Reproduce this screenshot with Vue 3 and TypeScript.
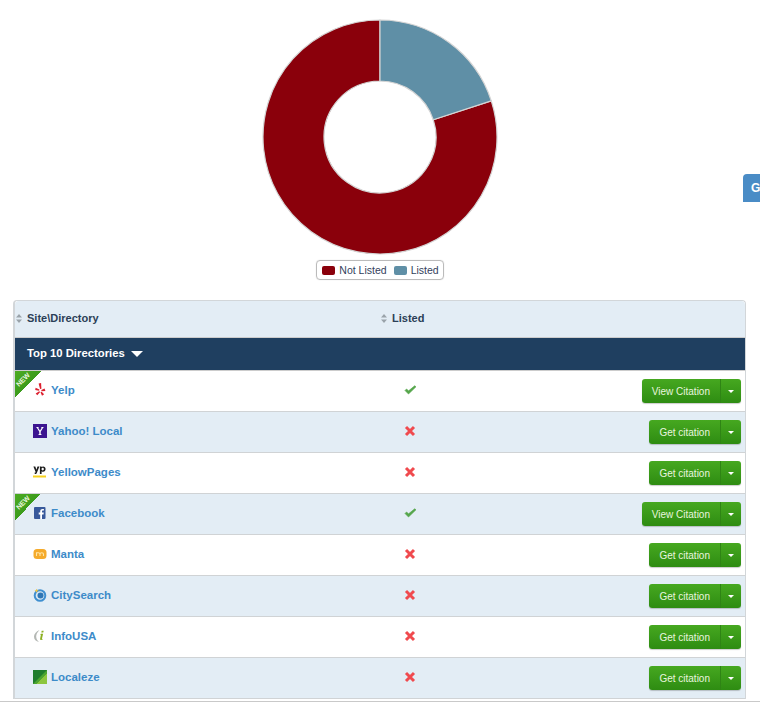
<script setup lang="ts">
type Row = { name: string; icon: string; listed: boolean; isNew?: boolean }

const rows: Row[] = [
  { name: 'Yelp', icon: 'yelp', listed: true, isNew: true },
  { name: 'Yahoo! Local', icon: 'yahoo', listed: false },
  { name: 'YellowPages', icon: 'yp', listed: false },
  { name: 'Facebook', icon: 'facebook', listed: true, isNew: true },
  { name: 'Manta', icon: 'manta', listed: false },
  { name: 'CitySearch', icon: 'citysearch', listed: false },
  { name: 'InfoUSA', icon: 'infousa', listed: false },
  { name: 'Localeze', icon: 'localeze', listed: false }
]

// donut slices, angles in degrees from 12 o'clock
const point = (r: number, deg: number) => {
  const a = ((deg - 90) * Math.PI) / 180
  return `${(120 + r * Math.cos(a)).toFixed(2)} ${(120 + r * Math.sin(a)).toFixed(2)}`
}

const slice = (from: number, to: number) => {
  const large = to - from > 180 ? 1 : 0
  const outer = 117
  const inner = 56
  return `M${point(outer, from)} A${outer} ${outer} 0 ${large} 1 ${point(outer, to)} L${point(inner, to)} A${inner} ${inner} 0 ${large} 0 ${point(inner, from)} Z`
}

const listedPath = slice(0, 72)
const notListedPath = slice(72, 360)
</script>

<template>
  <div class="page">
    <div class="side-tab">G</div>

    <div class="chart">
      <svg class="donut" width="240" height="240" viewBox="0 0 240 240">
        <path :d="notListedPath" fill="#8a000b" stroke="#d4d4d4" stroke-width="1.2" />
        <path :d="listedPath" fill="#5f8fa6" stroke="#d4d4d4" stroke-width="1.2" />
      </svg>
      <div class="legend">
        <span class="swatch red"></span>
        <span class="legend-text">Not Listed</span>
        <span class="swatch blue"></span>
        <span class="legend-text">Listed</span>
      </div>
    </div>

    <div class="table">
      <div class="head-row">
        <div class="head-cell">
          <svg class="sort" width="6" height="9" viewBox="0 0 6 9"><path d="M3 0L6 3.6H0ZM3 9L0 5.4H6Z" fill="#9aa3aa" /></svg>
          <span>Site\Directory</span>
        </div>
        <div class="head-cell">
          <svg class="sort" width="6" height="9" viewBox="0 0 6 9"><path d="M3 0L6 3.6H0ZM3 9L0 5.4H6Z" fill="#9aa3aa" /></svg>
          <span>Listed</span>
        </div>
      </div>

      <div class="group-row">
        <span>Top 10 Directories</span>
        <span class="group-caret"></span>
      </div>

      <div v-for="(row, i) in rows" :key="row.name" class="row" :class="{ alt: i % 2 === 1 }">
        <div v-if="row.isNew" class="ribbon"><span>NEW</span></div>
        <div class="site">
          <span class="icon">
            <svg v-if="row.icon === 'yelp'" width="14" height="14" viewBox="0 0 14 14">
              <g fill="#dc1f2e">
                <path d="M5.600 .6l2.500-.5.300 5.600-1.300.4z" />
                <path d="M2.600 4.800l3.800 1.700-.3 1.300-3.900-.7z" />
                <path d="M2.700 10.600l3.500-2.300.9.800-2.800 3.200z" />
                <path d="M7.500 9.200l1.100-.5 2.500 2.600-2.100 1.500z" />
                <path d="M8.300 6.900l3.300-1.300.8 2.300-3.900.4z" />
              </g>
            </svg>
            <svg v-else-if="row.icon === 'yahoo'" width="14" height="14" viewBox="0 0 14 14">
              <rect width="14" height="14" fill="#3c1590" />
              <path d="M3.200 3h2.600v.6l-.7.1L7 6.600l1.800-2.900-.7-.1V3h2.600v.6l-.6.1L7.700 7.800v2.300l.8.1v.7h-3v-.7l.8-.1V7.800L3.800 3.700l-.6-.1z" fill="#fff" />
            </svg>
            <svg v-else-if="row.icon === 'yp'" width="14" height="14" viewBox="0 0 14 14">
              <path d="M.4 1.500h1.900l1.100 3.200 1.100-3.200h1.900L3.800 8c-.3.800-.9 1.100-2.100 1V7.600c.6 0 .9 0 1-.4z" fill="#1c1c1c" />
              <path d="M6.900 1.500h1.600v.6c.4-.5.900-.7 1.600-.7 1.500 0 2.500 1.100 2.500 2.700s-1 2.700-2.500 2.700c-.6 0-1.100-.2-1.500-.6V9H6.900zM9.700 2.700c-.7 0-1.200.6-1.200 1.400s.5 1.400 1.200 1.400 1.200-.6 1.200-1.400-.5-1.400-1.200-1.400z" fill="#1c1c1c" />
              <rect x="0" y="10.500" width="13" height="2" fill="#f7d21e" />
            </svg>
            <svg v-else-if="row.icon === 'facebook'" width="14" height="14" viewBox="0 0 14 14">
              <rect x="1" y="1" width="11.500" height="12" rx="1" fill="#38599b" />
              <path d="M9 13V8.400h1.500l.3-1.800H9V5.500c0-.5.2-.9.9-.9h1V3c-.3 0-.8-.1-1.300-.1-1.400 0-2.400.8-2.400 2.400v1.300H5.700v1.800h1.500V13z" fill="#fff" />
            </svg>
            <svg v-else-if="row.icon === 'manta'" width="14" height="14" viewBox="0 0 14 14">
              <rect x=".5" y="2" width="13" height="10" rx="3.500" fill="#f5ab2c" />
              <path d="M3.500 9V5.800h1.800c1 0 1.700.5 1.700 1.400V9M7 7.200c0-.9.700-1.400 1.700-1.400s1.800.5 1.800 1.400V9" fill="none" stroke="#ffe6a8" stroke-width="1.100" />
            </svg>
            <svg v-else-if="row.icon === 'citysearch'" width="14" height="14" viewBox="0 0 14 14">
              <circle cx="7" cy="7.500" r="5.300" fill="#dbe9f3" stroke="#3f8fd0" stroke-width="2" />
              <circle cx="7.500" cy="7.500" r="3" fill="#2f77b5" />
              <path d="M3.500 .8l.8 1.400 1.500.5-1.500.6-.8 1.500-.7-1.500-1.500-.6 1.500-.5z" fill="#f2c440" />
            </svg>
            <svg v-else-if="row.icon === 'infousa'" width="14" height="14" viewBox="0 0 14 14">
              <path d="M6.500 1C3 2.500 1 5 1 7.800s2 4.700 5 5.200C4.200 11.300 3.200 9.800 3.200 7.600S4.300 3.300 6.500 1z" fill="#b4b8b4" />
              <path d="M8.700 1.800h2l-.4 1.800H8.300zM8 4.800h2.100L9 9.600c-.1.500.2.600.8.200l-.1.800c-1.200.8-2.900.6-2.600-.8l.8-4-.9-.2z" fill="#8cb021" />
            </svg>
            <svg v-else width="14" height="14" viewBox="0 0 14 14">
              <rect width="14" height="14" fill="#1f7d2d" />
              <path d="M14 3v11H3z" fill="#8cc63f" />
              <path d="M14 0v3L3 14H0z" fill="#4ba52f" />
            </svg>
          </span>
          <a class="site-name">{{ row.name }}</a>
        </div>
        <div class="status">
          <svg v-if="row.listed" width="13" height="10" viewBox="0 0 13 10">
            <path d="M1 5.500L4.500 9 12 1.800 10.700.8 4.600 5.800 2.500 4z" fill="#55a64b" stroke="#55a64b" stroke-width=".6" stroke-linejoin="round" />
          </svg>
          <svg v-else width="12" height="12" viewBox="0 0 12 12">
            <path d="M2 2l8 8M10 2l-8 8" stroke="#f04a4e" stroke-width="3" fill="none" />
          </svg>
        </div>
        <div class="actions">
          <div class="btn-group">
            <span class="btn-main">{{ row.listed ? 'View Citation' : 'Get citation' }}</span>
            <span class="btn-toggle"><i></i></span>
          </div>
        </div>
      </div>
    </div>
  </div>
</template>

<style scoped>
.page {
  position: relative;
  height: 702px;
  overflow: hidden;
  background: #fff;
  font-family: "Liberation Sans", Arial, sans-serif;
  box-sizing: border-box;
  border-bottom: 1px solid #c9c9c9;
}

.side-tab {
  position: absolute;
  left: 743px;
  top: 174px;
  width: 17px;
  height: 28px;
  box-sizing: border-box;
  padding: 7px 0 0 8px;
  background: #4a8cc6;
  border-top-left-radius: 4px;
  color: #fff;
  font-size: 12px;
  font-weight: bold;
  overflow: hidden;
}

.chart {
  display: flex;
  flex-direction: column;
  align-items: center;
  height: 300px;
  padding-top: 17px;
  box-sizing: border-box;
}

.donut {
  display: block;
  margin-bottom: 3px;
}

.legend {
  display: flex;
  align-items: center;
  height: 20px;
  box-sizing: border-box;
  padding: 0 4px 0 5px;
  border: 1px solid #bbb;
  border-radius: 4px;
  font-size: 10.5px;
  color: #33415c;
  box-shadow: 0 0 1px #ccc;
}

.swatch {
  width: 13px;
  height: 9px;
  border-radius: 2px;
  margin-right: 4px;
}

.swatch.red {
  background: #8a000b;
}

.swatch.blue {
  background: #5f8fa6;
  margin-left: 7px;
}

.table {
  margin: 0 14px 0 13px;
  border: 1px solid #d2d6d9;
  border-left-width: 2px;
  border-bottom: none;
  border-radius: 4px 4px 0 0;
}

.head-row {
  display: grid;
  grid-template-columns: 365px 1fr;
  height: 36px;
  background: #e3edf5;
  border-bottom: 1px solid #ccc;
  border-radius: 4px 4px 0 0;
}

.head-cell {
  display: flex;
  align-items: center;
  gap: 5px;
  padding: 0 0 2px 1px;
  box-sizing: border-box;
  font-size: 11px;
  font-weight: bold;
  color: #2b3f57;
}

.sort {
  flex: none;
}

.group-row {
  display: flex;
  align-items: center;
  height: 33px;
  padding: 0 0 2px 12px;
  box-sizing: border-box;
  background: #1f3f60;
  border-bottom: 1px solid #ccc;
  color: #fff;
  font-size: 11.3px;
  font-weight: bold;
}

.group-caret {
  width: 0;
  height: 0;
  margin: 2px 0 0 6px;
  border-left: 6px solid transparent;
  border-right: 6px solid transparent;
  border-top: 6px solid #fff;
}

.row {
  position: relative;
  display: grid;
  grid-template-columns: 365px 60px 1fr;
  align-items: center;
  height: 40px;
  background: #fff;
  border-bottom: 1px solid #d0d3d5;
}

.row.alt {
  background: #e3edf5;
}

.ribbon {
  position: absolute;
  left: 0;
  top: 0;
  width: 26px;
  height: 26px;
  overflow: hidden;
  background: linear-gradient(135deg, #4cab22 0%, #3c9c1c 50%, transparent 50%);
}

.ribbon span {
  position: absolute;
  left: -4px;
  top: 5px;
  width: 24px;
  transform: rotate(-45deg);
  text-align: center;
  color: #e6f4dc;
  font-size: 7px;
  font-weight: bold;
  line-height: 7px;
}

.site {
  display: flex;
  align-items: center;
  padding: 0 0 2px 18px;
}

.icon {
  display: flex;
  width: 14px;
  height: 14px;
  margin-right: 4px;
}

.site-name {
  color: #3d8bc9;
  font-size: 11.5px;
  font-weight: bold;
}

.status {
  display: flex;
  justify-content: center;
  align-items: center;
  padding-bottom: 2px;
}

.actions {
  display: flex;
  justify-content: flex-end;
  padding-right: 4px;
}

.btn-group {
  display: flex;
  height: 24px;
  border-radius: 3px;
  background: linear-gradient(#46a820, #2e8c12);
  box-shadow: 0 1px 1px rgba(0, 0, 0, 0.2);
  color: #e8f5df;
  font-size: 10px;
}

.btn-main {
  display: flex;
  align-items: center;
  padding: 0 10px;
  border-right: 1px solid #2f8415;
}

.btn-toggle {
  display: flex;
  align-items: center;
  justify-content: center;
  width: 20px;
}

.btn-toggle i {
  width: 0;
  height: 0;
  border-left: 3px solid transparent;
  border-right: 3px solid transparent;
  border-top: 3px solid #fff;
}
</style>

<style>
html,
body {
  margin: 0;
  background: #fff;
}
</style>
